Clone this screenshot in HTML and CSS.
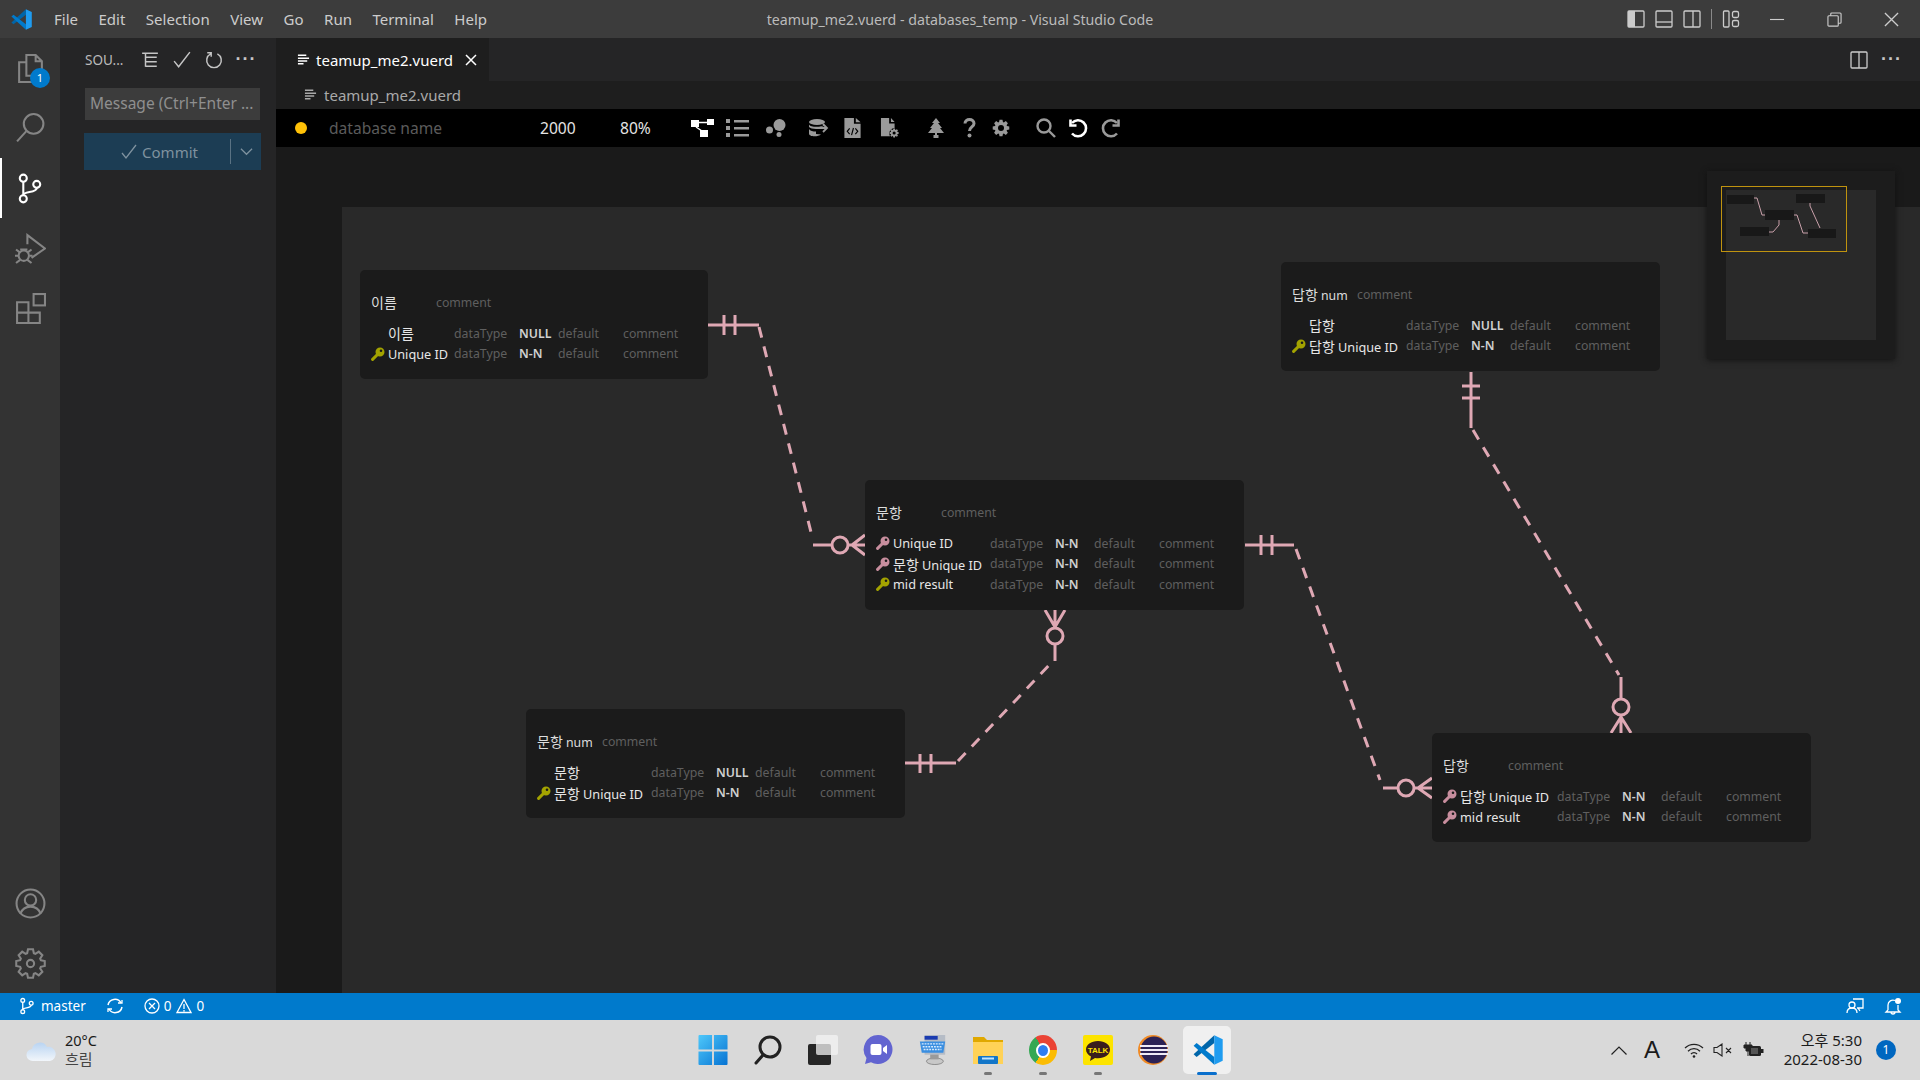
FILE: index.html
```html
<!DOCTYPE html>
<html lang="en">
<head>
    <meta charset="UTF-8">
    <meta name="viewport" content="width=device-width, initial-scale=1.0">
    <title>teamup_me2.vuerd - databases_temp - Visual Studio Code</title>
    <link rel="stylesheet" href="styles.css">
</head>
<body>

<svg class="defs" xmlns="http://www.w3.org/2000/svg">
    <symbol id="vscode" viewBox="0 0 100 100">
        <polygon points="2,64 12,73 71,27 71,1" fill="#0065a9"/>
        <polygon points="2,36 12,27 71,73 71,99" fill="#007acc"/>
        <polygon points="71,1 99,14 99,86 71,99" fill="#1f9cf0"/>
    </symbol>
    <symbol id="lines" viewBox="0 0 14 14">
        <path d="M1 2h9M1 5h12M1 8h10M1 11h6" stroke="currentColor" stroke-width="1.6" fill="none"/>
    </symbol>
    <symbol id="key" viewBox="0 0 14 14">
        <path d="M7.5 6.5L1.6 12.4" stroke="currentColor" stroke-width="3" stroke-linecap="round"/>
        <path fill-rule="evenodd" fill="currentColor" d="M9 .5a4.5 4.5 0 1 1 0 9a4.5 4.5 0 1 1 0-9zM10 2.4a1.3 1.3 0 1 0 0 2.6a1.3 1.3 0 1 0 0-2.6z"/>
    </symbol>
    <symbol id="gear" viewBox="-15 -15 30 30">
        <polygon points="9.99,-3.24 13.79,-2.43 13.79,2.43 9.99,3.24 9.36,4.77 11.47,8.03 8.03,11.47 4.77,9.36 3.24,9.99 2.43,13.79 -2.43,13.79 -3.24,9.99 -4.77,9.36 -8.03,11.47 -11.47,8.03 -9.36,4.77 -9.99,3.24 -13.79,2.43 -13.79,-2.43 -9.99,-3.24 -9.36,-4.77 -11.47,-8.03 -8.03,-11.47 -4.77,-9.36 -3.24,-9.99 -2.43,-13.79 2.43,-13.79 3.24,-9.99 4.77,-9.36 8.03,-11.47 11.47,-8.03 9.36,-4.77"/>
    </symbol>
</svg>

<div class="titlebar">
    <div class="menu">
        <svg class="logo"><use href="#vscode"/></svg>
        <span>File</span><span>Edit</span><span>Selection</span><span>View</span><span>Go</span><span>Run</span><span>Terminal</span><span>Help</span>
    </div>
    <div class="window-title">teamup_me2.vuerd - databases_temp - Visual Studio Code</div>
    <div class="window-btns">
        <span class="layout-btn"><svg viewBox="0 0 18 18"><rect x="1" y="1" width="16" height="16" rx="1" fill="none" stroke="currentColor" stroke-width="1.3"/><rect x="1" y="1" width="7" height="16" fill="currentColor"/></svg></span>
        <span class="layout-btn"><svg viewBox="0 0 18 18"><rect x="1" y="1" width="16" height="16" rx="1" fill="none" stroke="currentColor" stroke-width="1.3"/><path d="M1 12h16" stroke="currentColor" stroke-width="1.3"/></svg></span>
        <span class="layout-btn"><svg viewBox="0 0 18 18"><rect x="1" y="1" width="16" height="16" rx="1" fill="none" stroke="currentColor" stroke-width="1.3"/><path d="M10 1v16" stroke="currentColor" stroke-width="1.3"/></svg></span>
        <span class="layout-sep"></span>
        <span class="layout-btn last"><svg viewBox="0 0 18 18" fill="none" stroke="currentColor" stroke-width="1.3"><rect x="1.5" y="1" width="5.5" height="16" rx="1"/><rect x="10.5" y="1.5" width="6" height="6" rx="1.5"/><rect x="10.5" y="10.5" width="6" height="6" rx="1.5"/></svg></span>
        <span class="win-btn"><svg viewBox="0 0 16 16"><path d="M0 8h15" stroke="currentColor" stroke-width="1.2"/></svg></span>
        <span class="win-btn"><svg viewBox="0 0 16 16" fill="none" stroke="currentColor" stroke-width="1.2"><rect x="1" y="4" width="11" height="11" rx="1"/><path d="M4 4V2a1 1 0 0 1 1-1h9a1 1 0 0 1 1 1v9a1 1 0 0 1-1 1h-2"/></svg></span>
        <span class="win-btn"><svg viewBox="0 0 16 16"><path d="M1 1l14 14M15 1L1 15" stroke="currentColor" stroke-width="1.4"/></svg></span>
    </div>
</div>

<div class="main">
    <div class="activity">
        <div class="act-group">
            <div class="act-item">
                <svg viewBox="0 0 30 30" fill="none" stroke="currentColor" stroke-width="2"><path d="M11 2h9l6 6v14H11zM20 2v6h6M11 9H4v19h16v-6"/></svg>
                <span class="act-badge">1</span>
            </div>
            <div class="act-item"><svg viewBox="0 0 30 30" fill="none" stroke="currentColor" stroke-width="2"><circle cx="18" cy="10.500" r="9.500"/><path d="M11 17.500l-9 10"/></svg></div>
            <div class="act-item active"><svg viewBox="0 0 30 30" fill="none" stroke="currentColor" stroke-width="2"><circle cx="9" cy="5" r="3.4"/><circle cx="9" cy="25" r="3.4"/><circle cx="22" cy="11" r="3.4"/><path d="M9 8.500v13M22 14.500c0 5-13 3-13 7"/></svg></div>
            <div class="act-item"><svg viewBox="0 0 30 30" fill="none" stroke="currentColor" stroke-width="2"><path d="M12 11V2l17 13-13 9"/><circle cx="8.500" cy="22" r="5"/><path d="M1 16l4 3M16 16l-4 3M0 22h3M14 22h3M1 29l4-3M16 29l-4-3M5 16h7"/></svg></div>
            <div class="act-item"><svg viewBox="0 0 30 30" fill="none" stroke="currentColor" stroke-width="2"><rect x="18" y="1" width="11" height="11"/><path d="M2 9h11v20H2zM2 19h22v10H13"/></svg></div>
        </div>
        <div class="act-group">
            <div class="act-item"><svg viewBox="0 0 30 30" fill="none" stroke="currentColor" stroke-width="2"><circle cx="15" cy="15" r="13.500"/><circle cx="15" cy="11.500" r="5.500"/><path d="M5 25c2-5 6-7 10-7s8 2 10 7"/></svg></div>
            <div class="act-item"><svg viewBox="0 0 30 30" fill="none" stroke="currentColor" stroke-width="2"><use href="#gear"/><circle cx="15" cy="15" r="3.500"/></svg></div>
        </div>
    </div>

    <div class="sidebar">
        <div class="side-head">
            <span class="side-title">SOU...</span>
            <span class="side-btn"><svg viewBox="0 0 16 16" fill="none" stroke="currentColor" stroke-width="1.300"><path d="M1 2h14M4 2v12M4 5.500h10M4 9.500h10M4 13.500h10"/></svg></span>
            <span class="side-btn"><svg viewBox="0 0 16 16" fill="none" stroke="currentColor" stroke-width="1.300"><path d="M1 9l4 5L15 1"/></svg></span>
            <span class="side-btn"><svg viewBox="0 0 16 16" fill="none" stroke="currentColor" stroke-width="1.300"><path d="M5 2.500a6.500 6.500 0 1 0 6 0M2 1.500h3.500V5"/></svg></span>
            <span class="side-btn dots">···</span>
        </div>
        <div class="commit-input">Message (Ctrl+Enter ...</div>
        <div class="commit-btn">
            <span class="commit-label"><svg viewBox="0 0 16 16" fill="none" stroke="currentColor" stroke-width="1.300"><path d="M1 9l4 5L15 1"/></svg>Commit</span>
            <span class="commit-more"><svg viewBox="0 0 14 14" fill="none" stroke="currentColor" stroke-width="1.300"><path d="M1 4l6 6 6-6"/></svg></span>
        </div>
    </div>

    <div class="editor">
        <div class="tabs">
            <div class="tab">
                <svg class="file-ic"><use href="#lines"/></svg>
                <span class="tab-name">teamup_me2.vuerd</span>
                <svg class="tab-close" viewBox="0 0 12 12"><path d="M1 1l10 10M11 1L1 11" stroke="currentColor" stroke-width="1.500"/></svg>
            </div>
            <div class="tab-actions">
                <svg viewBox="0 0 18 18" fill="none" stroke="currentColor" stroke-width="1.300"><rect x="1" y="1" width="16" height="16" rx="1"/><path d="M9 1v16"/></svg>
                <span class="dots">···</span>
            </div>
        </div>
        <div class="breadcrumb">
            <svg class="file-ic"><use href="#lines"/></svg>
            <span>teamup_me2.vuerd</span>
        </div>

        <div class="toolbar">
            <span class="status-dot"></span>
            <span class="db-name">database name</span>
            <span class="canvas-size">2000</span>
            <span class="canvas-zoom">80%</span>
            <div class="tools">
                <svg class="ic-erd on" viewBox="0 0 23 18"><rect x="0" y="1" width="8" height="7"/><rect x="16" y="0" width="7" height="6"/><rect x="9" y="11" width="8" height="7"/><path d="M8 3.500h8M5 8l6 4" stroke="currentColor" stroke-width="1.500"/></svg>
                <svg class="ic-list" viewBox="0 0 23 18"><rect x="0" y="0" width="4" height="4"/><rect x="0" y="7" width="4" height="4"/><rect x="0" y="14" width="4" height="4"/><rect x="8" y="1" width="15" height="2.500"/><rect x="8" y="8" width="15" height="2.500"/><rect x="8" y="15" width="15" height="2.500"/></svg>
                <svg class="ic-visual" viewBox="0 0 20 18"><circle cx="13.500" cy="6" r="6"/><circle cx="3.500" cy="11" r="3.500"/><circle cx="13" cy="15.500" r="2.500"/></svg>
                <svg class="ic-db" viewBox="0 0 21 18"><ellipse cx="9" cy="3" rx="8" ry="3"/><path d="M1 5.500c1 3 13 3 15 .5v1l-3 1v2H8C5 10 2 9 1 8zM1 10c1 2 4 2.500 7 2.500V15l5 .5c-3 2.500-12 2.500-12-1z"/><path d="M11 9h7M15 5l4 4-4 4" fill="none" stroke="currentColor" stroke-width="1.800"/></svg>
                <svg class="ic-fcode" viewBox="0 0 17 21"><path d="M0 0h10v6h7v15H0z"/><path d="M12 0l5 4.500h-5z"/><path d="M5.500 11l-2.500 3 2.500 3M11.500 11l2.500 3-2.500 3M9.500 10.500l-2 7.500" fill="none" stroke="#000" stroke-width="1.200"/></svg>
                <svg class="ic-fcog" viewBox="0 0 21 22"><path d="M0 0h9v6h6v5a6 6 0 0 0-5 9H0z"/><path d="M11 0l4 4.500h-4z"/><use href="#gear" x="9" y="11" width="11" height="11"/><circle cx="14.500" cy="16.500" r="1.700" fill="#000"/></svg>
                <svg class="ic-tree" viewBox="0 0 16 20"><path d="M8 0l4 5h-2l4 5h-2l4 5H9v2h1.500v3h-5v-3H7v-2H0l4-5H2l4-5H4z"/></svg>
                <svg class="ic-help" viewBox="0 0 13 20"><path d="M2 5.500C2 3 4 1.500 6.500 1.500S11 3 11 5.500c0 3.500-4.500 3.500-4.500 7.500" fill="none" stroke="currentColor" stroke-width="3"/><circle cx="6.500" cy="17.500" r="2"/></svg>
                <svg class="ic-cog" viewBox="0 0 18 18"><use href="#gear" width="18" height="18"/><circle cx="9" cy="9" r="3" fill="#000"/></svg>
                <svg class="ic-search" viewBox="0 0 20 20" fill="none" stroke="currentColor" stroke-width="2.400"><circle cx="8" cy="8" r="6.500"/><path d="M12.500 12.500l6.500 6.500"/></svg>
                <svg class="ic-undo on" viewBox="0 0 19 19" fill="none" stroke="currentColor" stroke-width="2.600"><path d="M3 4.500a8 8 0 1 1 0 10.500"/><path d="M1.500 1v6h6" fill="none"/></svg>
                <svg class="ic-redo" viewBox="0 0 19 19" fill="none" stroke="currentColor" stroke-width="2.600"><path d="M16 4.500a8 8 0 1 0 0 10.500"/><path d="M17.500 1v6h-6"/></svg>
            </div>
        </div>

        <div class="canvas-wrap">
            <div class="canvas">
                <svg class="relations" viewBox="342 207 1578 786" fill="none" stroke="#dfa8b4" stroke-width="3">
                    <path d="M708 325H759"/><path d="M724 315v20M735 315v20"/>
                    <path class="dash" d="M759 327L813 540"/>
                    <path d="M813 545H832"/><circle cx="840" cy="545" r="8"/><path d="M848 545H865M852 545L865 535M852 545L865 555"/>

                    <path d="M1245 545H1294"/><path d="M1261 535v20M1272 535v20"/>
                    <path class="dash" d="M1296 549L1380 780"/>
                    <path d="M1383 788H1398"/><circle cx="1406" cy="788" r="8"/><path d="M1414 788H1432M1418 788L1432 778M1418 788L1432 798"/>

                    <path d="M905 763H956"/><path d="M920 754v19M931 754v19"/>
                    <path class="dash" d="M958 761L1053 661"/>
                    <path d="M1055 661V644"/><circle cx="1055" cy="636" r="8"/><path d="M1055 628V610M1055 627L1045 610M1055 627L1065 610"/>

                    <path d="M1471 372V428"/><path d="M1462 386h18M1462 398h18"/>
                    <path class="dash" d="M1473 430L1619 675"/>
                    <path d="M1621 677V699"/><circle cx="1621" cy="707" r="8"/><path d="M1621 715V733M1621 717L1611 733M1621 717L1631 733"/>
                </svg>

                <div class="tbl tbl-1 narrow">
                    <div class="tbl-head"><span class="t-name"><span class="ko">이름</span></span><span class="t-comment">comment</span></div>
                    <div class="row"><span class="k"></span><span class="n"><span class="ko">이름</span></span><span class="dt">dataType</span><span class="nn">NULL</span><span class="df">default</span><span class="cm">comment</span></div>
                    <div class="row"><span class="k pk"><svg><use href="#key"/></svg></span><span class="n">Unique ID</span><span class="dt">dataType</span><span class="nn">N-N</span><span class="df">default</span><span class="cm">comment</span></div>
                </div>

                <div class="tbl tbl-2">
                    <div class="tbl-head"><span class="t-name"><span class="ko">답항</span> num</span><span class="t-comment">comment</span></div>
                    <div class="row"><span class="k"></span><span class="n"><span class="ko">답항</span></span><span class="dt">dataType</span><span class="nn">NULL</span><span class="df">default</span><span class="cm">comment</span></div>
                    <div class="row"><span class="k pk"><svg><use href="#key"/></svg></span><span class="n"><span class="ko">답항</span> Unique ID</span><span class="dt">dataType</span><span class="nn">N-N</span><span class="df">default</span><span class="cm">comment</span></div>
                </div>

                <div class="tbl tbl-3">
                    <div class="tbl-head"><span class="t-name"><span class="ko">문항</span></span><span class="t-comment">comment</span></div>
                    <div class="row"><span class="k fk"><svg><use href="#key"/></svg></span><span class="n">Unique ID</span><span class="dt">dataType</span><span class="nn">N-N</span><span class="df">default</span><span class="cm">comment</span></div>
                    <div class="row"><span class="k fk"><svg><use href="#key"/></svg></span><span class="n"><span class="ko">문항</span> Unique ID</span><span class="dt">dataType</span><span class="nn">N-N</span><span class="df">default</span><span class="cm">comment</span></div>
                    <div class="row"><span class="k pk"><svg><use href="#key"/></svg></span><span class="n">mid result</span><span class="dt">dataType</span><span class="nn">N-N</span><span class="df">default</span><span class="cm">comment</span></div>
                </div>

                <div class="tbl tbl-4">
                    <div class="tbl-head"><span class="t-name"><span class="ko">문항</span> num</span><span class="t-comment">comment</span></div>
                    <div class="row"><span class="k"></span><span class="n"><span class="ko">문항</span></span><span class="dt">dataType</span><span class="nn">NULL</span><span class="df">default</span><span class="cm">comment</span></div>
                    <div class="row"><span class="k pk"><svg><use href="#key"/></svg></span><span class="n"><span class="ko">문항</span> Unique ID</span><span class="dt">dataType</span><span class="nn">N-N</span><span class="df">default</span><span class="cm">comment</span></div>
                </div>

                <div class="tbl tbl-5">
                    <div class="tbl-head"><span class="t-name"><span class="ko">답항</span></span><span class="t-comment">comment</span></div>
                    <div class="row"><span class="k fk"><svg><use href="#key"/></svg></span><span class="n"><span class="ko">답항</span> Unique ID</span><span class="dt">dataType</span><span class="nn">N-N</span><span class="df">default</span><span class="cm">comment</span></div>
                    <div class="row"><span class="k fk"><svg><use href="#key"/></svg></span><span class="n">mid result</span><span class="dt">dataType</span><span class="nn">N-N</span><span class="df">default</span><span class="cm">comment</span></div>
                </div>
            </div>

            <div class="minimap">
                <div class="mini-canvas"></div>
                <svg class="mini-lines" viewBox="1707 171 188 188" fill="none" stroke="#c9a0aa" stroke-width="1">
                    <rect class="mini-tbl" x="1727" y="195" width="27" height="9"/>
                    <rect class="mini-tbl" x="1796" y="194" width="29" height="9"/>
                    <rect class="mini-tbl" x="1765" y="210" width="29" height="10"/>
                    <rect class="mini-tbl" x="1740" y="227" width="29" height="9"/>
                    <rect class="mini-tbl" x="1808" y="229" width="28" height="9"/>
                    <path d="M1754 198h3l5 17h3M1794 215h3l6 18h5M1769 232h4l6-7v-5M1810 203v3l10 22"/>
                </svg>
                <div class="mini-view"></div>
            </div>
        </div>
    </div>
</div>

<div class="statusbar">
    <div class="status-left">
        <svg class="st-branch" viewBox="0 0 16 18" fill="none" stroke="currentColor" stroke-width="1.400"><circle cx="4" cy="3" r="2"/><circle cx="4" cy="15" r="2"/><circle cx="13" cy="6" r="2"/><path d="M4 5v8M13 8c0 4-9 2-9 5"/></svg>
        <span class="st-master">master</span>
        <svg class="st-sync" viewBox="0 0 18 18" fill="none" stroke="currentColor" stroke-width="1.500"><path d="M2 8a7 7 0 0 1 13-2M16 10a7 7 0 0 1-13 2"/><path d="M12 6h4V3M6 12H2v3" stroke-width="1.300"/></svg>
        <svg class="st-err" viewBox="0 0 16 16" fill="none" stroke="currentColor" stroke-width="1.300"><circle cx="8" cy="8" r="7"/><path d="M5 5l6 6M11 5l-6 6"/></svg>
        <span class="st-num">0</span>
        <svg class="st-warn" viewBox="0 0 16 16" fill="none" stroke="currentColor" stroke-width="1.300"><path d="M8 1.500L15 14.500H1zM8 6v5M8 12v1.500"/></svg>
        <span class="st-num">0</span>
    </div>
    <div class="status-right">
        <svg viewBox="0 0 18 18" fill="none" stroke="currentColor" stroke-width="1.300"><path d="M7 2h10v9h-6M12 11l2 3"/><circle cx="6" cy="8" r="3"/><path d="M1 16c0-3 2-5 5-5s5 2 5 5"/></svg>
        <svg viewBox="0 0 18 18" fill="none" stroke="currentColor" stroke-width="1.300"><path d="M4 13V8a5 5 0 0 1 7-4.500M14 8v5l2 2H2l2-2M7 15a2 2 0 0 0 4 0"/><circle cx="14" cy="4" r="3" fill="currentColor" stroke="none"/></svg>
    </div>
</div>

<div class="taskbar">
    <div class="weather">
        <svg viewBox="0 0 30 24"><defs><linearGradient id="cloud" x1="0" y1="0" x2="0" y2="1"><stop offset="0" stop-color="#b9d4f2"/><stop offset="1" stop-color="#f2f6fb"/></linearGradient></defs><path fill="url(#cloud)" d="M7 23a6 6 0 0 1-1-12 8 8 0 0 1 15-2 6 6 0 0 1 3 14z"/></svg>
        <div class="weather-text"><span class="w-temp">20°C</span><span class="w-desc">흐림</span></div>
    </div>

    <div class="task-icons">
        <div class="task-slot">
            <svg viewBox="0 0 30 31"><defs><linearGradient id="win" x1="0" y1="0" x2="1" y2="1"><stop offset="0" stop-color="#4fc8fa"/><stop offset="1" stop-color="#0673d3"/></linearGradient></defs><path fill="url(#win)" d="M1 0h13v15H0V1a1 1 0 0 1 1-1zM16 0h13a1 1 0 0 1 1 1v14H16zM0 17h14v14H1a1 1 0 0 1-1-1zM16 17h14v13a1 1 0 0 1-1 1H16z"/></svg>
        </div>
        <div class="task-slot">
            <svg viewBox="0 0 30 30" fill="none" stroke="#222" stroke-width="3"><circle cx="17" cy="12" r="10"/><path d="M10 20l-7 8" stroke-linecap="round"/></svg>
        </div>
        <div class="task-slot">
            <svg viewBox="0 0 30 30"><rect x="0" y="9" width="23" height="21" rx="2" fill="#262626"/><rect x="8" y="0" width="22" height="20" rx="2" fill="#f3f3f3" fill-opacity=".75"/></svg>
        </div>
        <div class="task-slot">
            <svg viewBox="0 0 30 30"><path d="M15 0a14.500 14.500 0 1 1-7 27.200L2 29l1.500-6A14.500 14.500 0 0 1 15 0z" fill="#6264d0"/><rect x="7.500" y="9" width="11" height="11" rx="2" fill="#fff"/><path d="M20 13l4-3v9l-4-3z" fill="#fff"/></svg>
        </div>
        <div class="task-slot">
            <svg viewBox="0 0 30 32"><ellipse cx="17" cy="28" rx="9" ry="3.500" fill="#c8c8c8" stroke="#8a8a8a"/><rect x="12" y="20" width="9" height="6" fill="#9a9a9a"/><rect x="6" y="0" width="22" height="21" fill="#b5bcc6"/><rect x="6" y="1" width="14" height="4" fill="#1a3bb0"/><path d="M1 7h27l-2 12H3z" fill="#3a8ee0"/><path d="M3 9.500h23M4 12.500h21M5 15.500h19" stroke="#d9ecff" stroke-width="1.500" stroke-dasharray="2 1"/></svg>
        </div>
        <div class="task-slot dot">
            <svg viewBox="0 0 30 28"><path d="M0 1h11l3 3h16v24H0z" fill="#e0a800"/><path d="M0 6h30v22H0z" fill="#ffd257"/><rect x="5" y="20" width="20" height="8" rx="1" fill="#1376c8"/><rect x="9" y="21.500" width="12" height="2" fill="#bfe3ff"/></svg>
        </div>
        <div class="task-slot dot"><span class="chrome"><span class="chrome-eye"></span></span></div>
        <div class="task-slot dot">
            <svg viewBox="0 0 30 30"><rect width="30" height="30" rx="2" fill="#fde400"/><path d="M15 6c-7 0-12 3.700-12 8.500 0 3 2 5.500 5 7l-1 4.500 5-3c1 .1 2 .2 3 .2 7 0 12-3.800 12-8.700S22 6 15 6z" fill="#3a1d1d"/><text x="15" y="18" class="talk">TALK</text></svg>
        </div>
        <div class="task-slot">
            <svg viewBox="0 0 30 30"><circle cx="15" cy="15" r="15" fill="#f08a24"/><circle cx="16" cy="15" r="13.500" fill="#2c2255"/><path d="M2 11h28M2 15h28M2 19h28" stroke="#efeaf6" stroke-width="2"/></svg>
        </div>
        <div class="task-slot current">
            <svg viewBox="0 0 100 100"><use href="#vscode"/></svg>
        </div>
    </div>

    <div class="tray">
        <svg class="tr-up" viewBox="0 0 16 9" fill="none" stroke="#222" stroke-width="1.200"><path d="M.5 8.500L8 1l7.500 7.500"/></svg>
        <span class="tr-ime">A</span>
        <svg class="tr-wifi" viewBox="0 0 20 15" fill="none" stroke="#222" stroke-width="1.300"><path d="M1 5a13 13 0 0 1 18 0M4 8.200a8.500 8.500 0 0 1 12 0M7 11a4 4 0 0 1 6 0"/><circle cx="10" cy="13.500" r="1.300" fill="#222" stroke="none"/></svg>
        <svg class="tr-vol" viewBox="0 0 20 14" fill="none" stroke="#222" stroke-width="1.100"><path d="M1 4.500h3L9 1v12L4 9.500H1zM13 5l5 5M18 5l-5 5"/></svg>
        <svg class="tr-bat" viewBox="0 0 21 16"><path d="M3 0v3M7 0v3M1 3h8v3H7v3H3V6H1zM5 9v5" stroke="#222" stroke-width="1" fill="#222"/><rect x="6" y="4" width="12" height="10" rx="1.500" fill="#222"/><rect x="8" y="6" width="7" height="6" fill="#555"/><rect x="18" y="7" width="2.500" height="4" fill="#222"/></svg>
        <div class="clock"><span>오후 5:30</span><span>2022-08-30</span></div>
        <span class="tr-badge">1</span>
    </div>
</div>

</body>
</html>
```
FILE: styles.css
```css
* {
    margin: 0;
    padding: 0;
    box-sizing: border-box;
}
body {
    width: 1920px;
    height: 1080px;
    overflow: hidden;
    display: flex;
    flex-direction: column;
    background: #1a1a1a;
    font-family: 'Noto Sans', 'Noto Sans CJK KR', sans-serif;
    font-size: 15px;
    color: #ccc;
}
.defs {
    display: none;
}
.dots {
    font-family: 'Liberation Sans', sans-serif;
    font-weight: bold;
    font-size: 18px;
    letter-spacing: 1px;
    color: #c5c5c5;
}

/* title bar */
.titlebar {
    height: 38px;
    flex: none;
    display: grid;
    grid-template-columns: 1fr auto 1fr;
    align-items: center;
    background: #3c3c3c;
}
.menu {
    display: flex;
    align-items: center;
    gap: 20.5px;
    color: #ccc;
}
.logo {
    width: 21px;
    height: 21px;
    margin-left: 11px;
    margin-right: 1.500px;
}
.window-title {
    color: #bbb;
    font-size: 14.2px;
}
.window-btns {
    display: flex;
    justify-content: flex-end;
    align-items: center;
    color: #ccc;
}
.layout-btn {
    width: 28px;
    display: flex;
    justify-content: center;
}
.layout-btn.last {
    margin-right: 4px;
}
.layout-btn svg {
    width: 18px;
    height: 20px;
}
.layout-sep {
    width: 1px;
    height: 20px;
    margin: 0 5px;
    background: #8a8a8a;
}
.win-btn {
    width: 57px;
    display: flex;
    justify-content: center;
}
.win-btn svg {
    width: 15px;
    height: 15px;
}

/* main area */
.main {
    flex: 1;
    display: flex;
    min-height: 0;
}
.activity {
    width: 60px;
    flex: none;
    display: flex;
    flex-direction: column;
    justify-content: space-between;
    background: #333;
}
.act-item {
    position: relative;
    height: 60px;
    display: flex;
    justify-content: center;
    align-items: center;
    color: #858585;
}
.act-item svg {
    width: 31px;
    height: 31px;
}
.act-item.active {
    color: #fff;
    border-left: 2px solid #fff;
    padding-right: 4px;
}
.act-badge {
    position: absolute;
    left: 30px;
    top: 30px;
    width: 20px;
    height: 20px;
    border-radius: 50%;
    background: #007acc;
    color: #fff;
    font-size: 11px;
    line-height: 20px;
    text-align: center;
}

/* source control */
.sidebar {
    width: 216px;
    flex: none;
    background: #252526;
}
.side-head {
    height: 43px;
    display: flex;
    align-items: center;
    padding-left: 25px;
}
.side-title {
    width: 49px;
    font-size: 13.5px;
    color: #bbb;
}
.side-btn {
    width: 32px;
    display: flex;
    justify-content: center;
    color: #c5c5c5;
}
.side-btn svg {
    width: 18px;
    height: 18px;
}
.commit-input {
    width: 175px;
    height: 32px;
    margin: 7px 0 0 25px;
    padding-left: 5px;
    background: #3c3c3c;
    color: #8f8f8f;
    font-size: 15.5px;
    line-height: 31px;
    white-space: nowrap;
}
.commit-btn {
    width: 177px;
    height: 37px;
    margin: 13px 0 0 24px;
    display: flex;
    align-items: center;
    background: #1c3d54;
    color: #7f929f;
}
.commit-label {
    flex: 1;
    display: flex;
    align-items: center;
    justify-content: center;
    gap: 5px;
    padding-left: 5px;
    border-right: 1px solid #5a7283;
    height: 25px;
}
.commit-label svg {
    width: 16px;
    height: 16px;
}
.commit-more {
    width: 30px;
    display: flex;
    justify-content: center;
}
.commit-more svg {
    width: 13px;
    height: 13px;
}

/* editor */
.editor {
    flex: 1;
    min-width: 0;
    display: flex;
    flex-direction: column;
}
.tabs {
    height: 43px;
    flex: none;
    display: flex;
    justify-content: space-between;
    background: #252526;
}
.tab {
    width: 213px;
    display: flex;
    align-items: center;
    padding-left: 21px;
    background: #1e1e1e;
    color: #fff;
}
.file-ic {
    width: 13px;
    height: 14px;
    flex: none;
}
.tab-name {
    margin-left: 6px;
}
.tab-close {
    width: 12px;
    height: 12px;
    margin-left: 12px;
}
.tab-actions {
    display: flex;
    align-items: center;
    gap: 13px;
    padding-right: 18px;
}
.tab-actions svg {
    width: 18px;
    height: 18px;
}
.breadcrumb {
    height: 28px;
    flex: none;
    display: flex;
    align-items: center;
    gap: 7px;
    padding-left: 28px;
    background: #1e1e1e;
    color: #a9a9a9;
}

/* vuerd menu */
.toolbar {
    height: 38px;
    flex: none;
    display: flex;
    align-items: center;
    background: #000;
    font-size: 15.6px;
}
.status-dot {
    width: 12px;
    height: 12px;
    margin-left: 19px;
    border-radius: 50%;
    background: #ffc107;
}
.db-name {
    width: 211px;
    margin-left: 22px;
    color: #5b5b5b;
}
.canvas-size {
    width: 80px;
    color: #e4e4e4;
}
.canvas-zoom {
    width: 71px;
    color: #e4e4e4;
}
.tools {
    display: flex;
    align-items: center;
    color: #9a9a9a;
}
.tools svg {
    height: 20px;
    fill: currentColor;
}
.tools svg.on {
    color: #fff;
}
.tools svg[fill="none"] {
    fill: none;
}
.ic-erd { width: 23px; }
.ic-list { width: 23px; margin-left: 12px; }
.ic-visual { width: 20px; margin-left: 17px; }
.ic-db { width: 21px; margin-left: 22px; }
.ic-fcode { width: 17px; margin-left: 15px; }
.ic-fcog { width: 21px; margin-left: 19px; }
.ic-tree { width: 16px; margin-left: 27px; }
.ic-help { width: 13px; margin-left: 19px; }
.ic-cog { width: 18px; margin-left: 16px; }
.ic-search { width: 20px; margin-left: 26px; }
.ic-undo { width: 19px; margin-left: 13px; }
.ic-redo { width: 19px; margin-left: 13px; }

/* erd canvas */
.canvas-wrap {
    position: relative;
    flex: 1;
    min-height: 0;
    padding: 60px 0 0 66px;
    background: #1a1a1a;
    overflow: hidden;
}
.canvas {
    position: relative;
    width: 100%;
    height: 100%;
    background: #292929;
}
.relations {
    position: absolute;
    left: 0;
    top: 0;
    width: 1578px;
    height: 786px;
}
.dash {
    stroke-dasharray: 11 9;
}
.tbl {
    position: absolute;
    width: 379px;
    padding: 21px 0 15px 11px;
    border-radius: 5px;
    background: #1b1b1b;
    font-size: 12.3px;
    color: #5f5f5f;
}
.tbl-1 { left: 18px; top: 63px; width: 348px; }
.tbl-2 { left: 939px; top: 55px; }
.tbl-3 { left: 523px; top: 273px; }
.tbl-4 { left: 184px; top: 502px; }
.tbl-5 { left: 1090px; top: 526px; }
.tbl-head {
    height: 22px;
    margin-bottom: 10px;
    display: flex;
    align-items: center;
}
.ko {
    font-size: 14px;
}
.t-name {
    width: 65px;
    color: #ddd;
    white-space: nowrap;
}
.row {
    height: 20.5px;
    display: flex;
    align-items: center;
    white-space: nowrap;
}
.k {
    width: 17px;
    height: 14px;
}
.k svg {
    width: 14px;
    height: 14px;
}
.k.pk { color: #a3a300; }
.k.fk { color: #c88e9e; }
.n {
    width: 97px;
    color: #e6e6e6;
    font-size: 12.7px;
}
.narrow .n {
    width: 66px;
}
.dt { width: 65px; }
.nn {
    width: 39px;
    color: #d0d0d0;
    font-weight: 600;
}
.df { width: 65px; }

/* minimap */
.minimap {
    position: absolute;
    left: 1431px;
    top: 24px;
    width: 188px;
    height: 188px;
    background: #1c1c1c;
    box-shadow: 0 1px 6px #111;
}
.mini-canvas {
    position: absolute;
    left: 19px;
    top: 19px;
    width: 150px;
    height: 150px;
    background: #292929;
}
.mini-lines {
    position: absolute;
    left: 0;
    top: 0;
    width: 188px;
    height: 188px;
}
.mini-tbl {
    fill: #181818;
    stroke: none;
}
.mini-view {
    position: absolute;
    left: 14px;
    top: 15px;
    width: 126px;
    height: 66px;
    border: 1px solid #c0930f;
}

/* status bar */
.statusbar {
    height: 27px;
    flex: none;
    display: flex;
    justify-content: space-between;
    align-items: center;
    padding-bottom: 1px;
    background: #007acc;
    color: #fff;
    font-size: 13.5px;
}
.status-left {
    display: flex;
    align-items: center;
}
.st-branch {
    width: 15px;
    height: 18px;
    margin-left: 19px;
}
.st-master {
    margin-left: 7px;
}
.st-sync {
    width: 18px;
    height: 18px;
    margin-left: 20px;
}
.st-err {
    width: 16px;
    height: 16px;
    margin-left: 20px;
}
.st-warn {
    width: 16px;
    height: 16px;
    margin-left: 5px;
}
.st-num {
    margin-left: 4px;
}
.status-right {
    display: flex;
    gap: 20px;
    padding-right: 18px;
}
.status-right svg {
    width: 18px;
    height: 18px;
}

/* windows taskbar */
.taskbar {
    height: 60px;
    flex: none;
    display: grid;
    grid-template-columns: 1fr auto 1fr;
    align-items: center;
    background: #d9d9d9;
    color: #1b1b1b;
}
.weather {
    display: flex;
    align-items: center;
    gap: 9px;
    padding-left: 26px;
}
.weather svg {
    width: 30px;
    height: 24px;
}
.weather-text {
    display: flex;
    flex-direction: column;
    font-size: 14.5px;
    line-height: 19px;
}
.w-desc {
    color: #444;
    font-size: 15px;
}
.task-icons {
    display: flex;
}
.task-slot {
    position: relative;
    width: 55px;
    height: 60px;
    display: flex;
    justify-content: center;
    align-items: center;
}
.task-slot svg {
    width: 30px;
    height: 30px;
}
.task-slot.dot::after,
.task-slot.current::after {
    content: "";
    position: absolute;
    left: 24px;
    bottom: 5px;
    width: 8px;
    height: 3px;
    border-radius: 2px;
    background: #777;
}
.task-slot.current::before {
    content: "";
    position: absolute;
    left: 3px;
    top: 6px;
    width: 48px;
    height: 48px;
    border-radius: 5px;
    background: #f0f0f0;
}
.task-slot.current::after {
    left: 17px;
    width: 20px;
    background: #0a6fcc;
}
.task-slot.current svg {
    position: relative;
}
.chrome {
    width: 28px;
    height: 30px;
    display: flex;
    justify-content: center;
    align-items: center;
    border-radius: 50%;
    background: conic-gradient(#ea4335 0 90deg, #fbbc04 90deg 210deg, #34a853 210deg 330deg, #ea4335 330deg);
}
.chrome-eye {
    width: 14px;
    height: 15px;
    border-radius: 50%;
    border: 2px solid #fff;
    background: #2f7df0;
}
.talk {
    font-family: 'Liberation Sans', sans-serif;
    font-size: 8px;
    font-weight: bold;
    fill: #fde400;
    text-anchor: middle;
}
.tray {
    display: flex;
    justify-content: flex-end;
    align-items: center;
    padding-right: 24px;
}
.tr-up { width: 16px; height: 9px; }
.tr-ime {
    width: 26px;
    margin: 0 19px 0 12px;
    font-size: 24px;
    text-align: center;
    font-family: 'Liberation Sans', sans-serif;
}
.tr-wifi { width: 20px; height: 15px; }
.tr-vol { width: 20px; height: 14px; margin-left: 9px; }
.tr-bat { width: 21px; height: 16px; margin-left: 10px; }
.clock {
    width: 78px;
    margin-left: 20px;
    display: flex;
    flex-direction: column;
    align-items: flex-end;
    font-size: 15px;
    line-height: 19px;
    white-space: nowrap;
}
.tr-badge {
    width: 20px;
    height: 20px;
    margin-left: 14px;
    border-radius: 50%;
    background: #0067c0;
    color: #fff;
    font-size: 12px;
    line-height: 20px;
    text-align: center;
}
```
